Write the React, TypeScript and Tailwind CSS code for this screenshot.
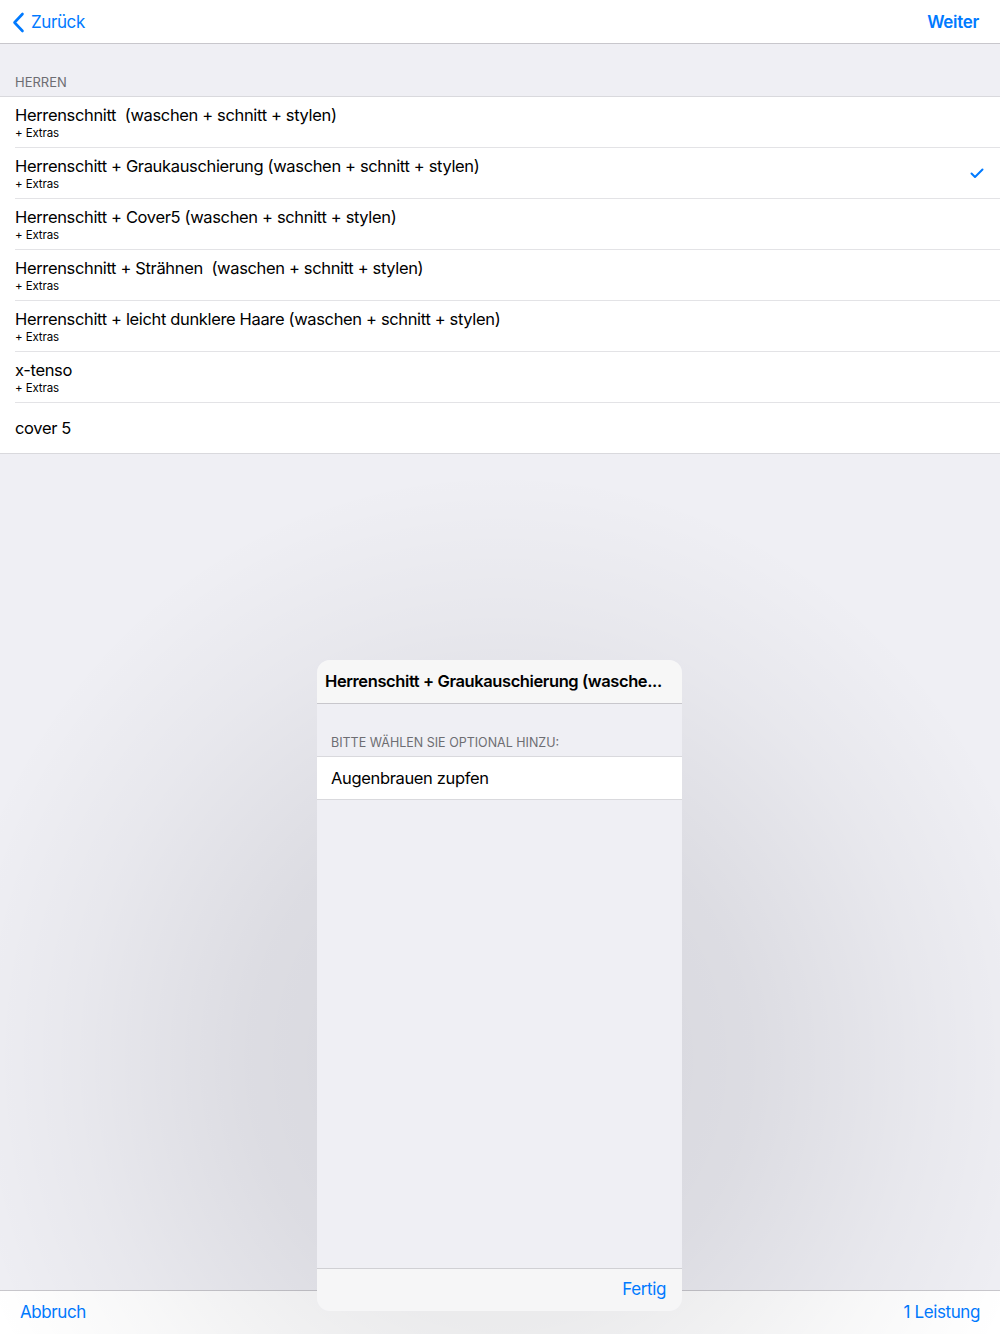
import React from 'react';

interface Service {
  title: string;
  extras: boolean;
  selected?: boolean;
}

const services: Service[] = [
  { title: 'Herrenschnitt  (waschen + schnitt + stylen)', extras: true },
  { title: 'Herrenschitt + Graukauschierung (waschen + schnitt + stylen)', extras: true, selected: true },
  { title: 'Herrenschitt + Cover5 (waschen + schnitt + stylen)', extras: true },
  { title: 'Herrenschnitt + Strähnen  (waschen + schnitt + stylen)', extras: true },
  { title: 'Herrenschitt + leicht dunklere Haare (waschen + schnitt + stylen)', extras: true },
  { title: 'x-tenso', extras: true },
  { title: 'cover 5', extras: false },
];

const App: React.FC = () => {
  return (
    <div className="relative h-[1334px] w-[1000px] overflow-hidden bg-[#efeff4] font-['Inter',sans-serif] text-black flex flex-col">
      {/* nav bar */}
      <div className="h-[44px] shrink-0 bg-white border-b border-[#c8c7cc] flex items-center justify-between pl-[12px] pr-[21px] pt-[2px]">
        <div className="flex items-center gap-[6px] text-[#007aff] text-[17px] tracking-[-0.4px]">
          <svg width="13" height="21" viewBox="0 0 13 21" fill="none">
            <path d="M10.5 2 L2.5 10.5 L10.5 19" stroke="#007aff" strokeWidth="2.6" strokeLinecap="round" strokeLinejoin="round" />
          </svg>
          <span>Zurück</span>
        </div>
        <span className="text-[#007aff] text-[17px] font-semibold tracking-[-0.3px]">Weiter</span>
      </div>

      {/* section header */}
      <div className="h-[53px] shrink-0 flex items-end pl-[15px] pb-[4px] border-b border-[#d9d9dd]">
        <span className="text-[13px] text-[#6d6d72]">HERREN</span>
      </div>

      {/* list */}
      <div className="bg-white border-b border-[#d9d9dd]">
        {services.map((s, i) => (
          <div key={s.title} className="pl-[15px]">
            <div
              className={`flex items-center pr-[16px] ${i < services.length - 1 ? 'border-b border-[#e3e3e6] h-[51px]' : 'h-[50px]'}`}
            >
              <div className="flex-1 flex flex-col justify-center">
                <div className="text-[16.5px] leading-[20px] tracking-[-0.35px] whitespace-pre">{s.title}</div>
                {s.extras && <div className="text-[11.5px] leading-[14px] mt-[1px] tracking-[-0.1px]">+ Extras</div>}
              </div>
              {s.selected && (
                <svg width="14" height="11" viewBox="0 0 14 11" fill="none">
                  <path d="M1.5 5.5 L5 9 L12.5 1.5" stroke="#007aff" strokeWidth="2" strokeLinecap="round" strokeLinejoin="round" />
                </svg>
              )}
            </div>
          </div>
        ))}
      </div>

      <div className="flex-1" />

      {/* toolbar */}
      <div className="h-[44px] shrink-0 bg-white border-t border-[#c8c7cc] flex items-center justify-between px-[20px] text-[#007aff] text-[17px] tracking-[-0.4px]">
        <span>Abbruch</span>
        <span>1 Leistung</span>
      </div>

      {/* dimmed halo behind the sheet */}
      <div className="absolute left-[-60px] top-[470px] w-[1120px] h-[1180px] bg-[radial-gradient(closest-side,rgba(0,0,20,0.11),rgba(0,0,20,0.08)_45%,rgba(0,0,20,0.03)_75%,transparent)]" />

      {/* modal sheet */}
      <div className="absolute left-[317px] top-[660px] w-[365px] h-[651px] rounded-[13px] overflow-hidden bg-[#efeff4] flex flex-col">
        <div className="h-[44px] shrink-0 bg-[#f7f7f7] border-b border-[#c8c7cc] flex items-center px-[8px]">
          <span className="text-[16.5px] font-semibold whitespace-nowrap tracking-[-0.4px]">Herrenschitt + Graukauschierung (wasche...</span>
        </div>
        <div className="h-[53px] shrink-0 flex items-end pl-[14px] pb-[3px] border-b border-[#d9d9dd]">
          <span className="text-[12.5px] text-[#6d6d72]">BITTE WÄHLEN SIE OPTIONAL HINZU:</span>
        </div>
        <div className="h-[43px] shrink-0 bg-white border-b border-[#d9d9dd] flex items-center pl-[14px]">
          <span className="text-[16.5px] tracking-[-0.35px]">Augenbrauen zupfen</span>
        </div>
        <div className="flex-1" />
        <div className="h-[43px] shrink-0 bg-[#f6f6f7] border-t border-[#d0d0d4] flex items-center justify-end pr-[16px]">
          <span className="text-[#007aff] text-[17px] tracking-[-0.4px]">Fertig</span>
        </div>
      </div>
    </div>
  );
};

export default App;
